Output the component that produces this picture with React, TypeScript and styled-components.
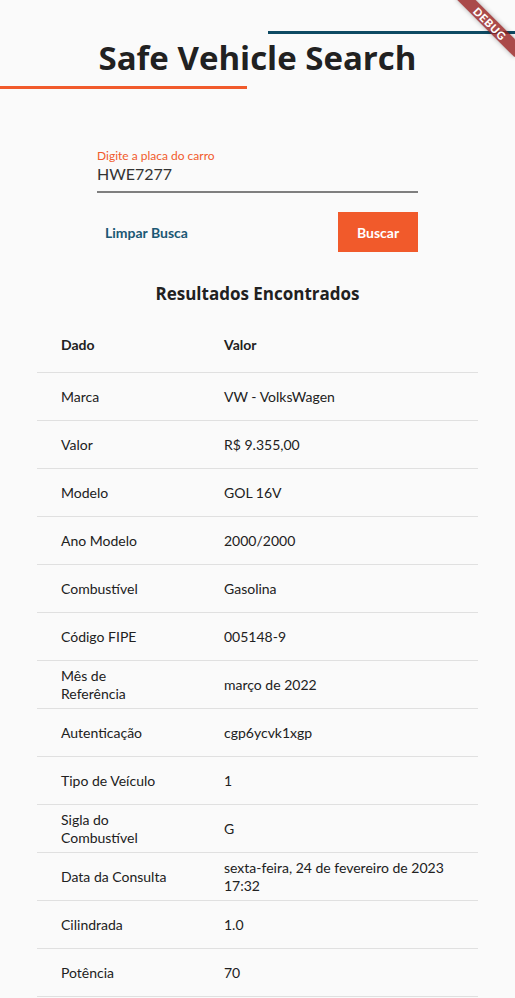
import React from "react";
import styled, { createGlobalStyle } from "styled-components";

const GlobalStyle = createGlobalStyle`
  html, body {
    margin: 0;
    padding: 0;
    background: #fafafa;
    overflow: hidden;
  }
  * { box-sizing: border-box; }
`;

const Page = styled.div`
  position: relative;
  width: 515px;
  height: 998px;
  overflow: hidden;
  background: #fafafa;
  font-family: Lato, "Open Sans", sans-serif;
  color: #212121;
  display: flex;
  flex-direction: column;
`;

const Bar = styled.div<{ $color: string; $side: "left" | "right" }>`
  width: 247px;
  height: 3px;
  background: ${(p) => p.$color};
  align-self: ${(p) => (p.$side === "left" ? "flex-start" : "flex-end")};
`;

const TopBar = styled(Bar)`
  margin-top: 31px;
`;

const BottomBar = styled(Bar)`
  margin-top: 8px;
`;

const Title = styled.h1`
  margin: 4px 0 0;
  font-family: "Open Sans", Lato, sans-serif;
  font-size: 33px;
  line-height: 40px;
  font-weight: 700;
  text-align: center;
  color: #212121;
`;

const Form = styled.div`
  width: 321px;
  margin: 59px auto 0;
  display: flex;
  flex-direction: column;
`;

const Field = styled.label`
  display: flex;
  flex-direction: column;
  padding-bottom: 7px;
  border-bottom: 2px solid #7f7f7f;
`;

const FieldLabel = styled.span`
  font-size: 12px;
  line-height: 16px;
  color: #f15a2b;
`;

const FieldValue = styled.span`
  font-size: 16px;
  line-height: 20px;
  color: #333333;
`;

const Actions = styled.div`
  margin-top: 19px;
  display: flex;
  justify-content: space-between;
  align-items: center;
`;

const TextButton = styled.button`
  border: none;
  background: transparent;
  padding: 0 8px;
  height: 40px;
  font-family: inherit;
  font-size: 14px;
  font-weight: 700;
  color: #1b5874;
  cursor: pointer;
`;

const PrimaryButton = styled.button`
  border: none;
  background: #f15a2b;
  width: 80px;
  height: 40px;
  font-family: inherit;
  font-size: 14px;
  font-weight: 700;
  color: #ffffff;
  cursor: pointer;
`;

const SectionTitle = styled.h2`
  margin: 31px 0 0;
  font-family: "Open Sans", Lato, sans-serif;
  font-size: 17px;
  line-height: 22px;
  font-weight: 700;
  text-align: center;
  color: #212121;
`;

const Table = styled.div`
  width: 441px;
  margin: 12px auto 0;
  display: flex;
  flex-direction: column;
`;

const Row = styled.div<{ $head?: boolean }>`
  display: grid;
  grid-template-columns: 107px 1fr;
  column-gap: 56px;
  align-items: center;
  padding: 0 24px;
  height: ${(p) => (p.$head ? 56 : 48)}px;
  border-bottom: 1px solid #e0e0e0;
  font-size: 14px;
  line-height: 18px;
  font-weight: ${(p) => (p.$head ? 700 : 400)};
  color: #212121;
`;

const Cell = styled.div``;

const Banner = styled.div`
  position: absolute;
  top: 17px;
  right: -16px;
  width: 82px;
  height: 13px;
  transform: rotate(45deg);
  background: rgba(150, 30, 30, 0.8);
  box-shadow: 0 0 5px rgba(0, 0, 0, 0.3);
  color: #ffffff;
  font-family: Lato, sans-serif;
  font-size: 11px;
  font-weight: 900;
  line-height: 13px;
  letter-spacing: 0.6px;
  text-align: center;
`;

const rows: [string, string][] = [
  ["Marca", "VW - VolksWagen"],
  ["Valor", "R$ 9.355,00"],
  ["Modelo", "GOL 16V"],
  ["Ano Modelo", "2000/2000"],
  ["Combustível", "Gasolina"],
  ["Código FIPE", "005148-9"],
  ["Mês de Referência", "março de 2022"],
  ["Autenticação", "cgp6ycvk1xgp"],
  ["Tipo de Veículo", "1"],
  ["Sigla do Combustível", "G"],
  ["Data da Consulta", "sexta-feira, 24 de fevereiro de 2023 17:32"],
  ["Cilindrada", "1.0"],
  ["Potência", "70"],
];

export default function App() {
  return (
    <>
      <GlobalStyle />
      <Page>
        <TopBar $color="#0e4a63" $side="right" />
        <Title>Safe Vehicle Search</Title>
        <BottomBar $color="#f15a2b" $side="left" />
        <Form>
          <Field>
            <FieldLabel>Digite a placa do carro</FieldLabel>
            <FieldValue>HWE7277</FieldValue>
          </Field>
          <Actions>
            <TextButton>Limpar Busca</TextButton>
            <PrimaryButton>Buscar</PrimaryButton>
          </Actions>
        </Form>
        <SectionTitle>Resultados Encontrados</SectionTitle>
        <Table>
          <Row $head>
            <Cell>Dado</Cell>
            <Cell>Valor</Cell>
          </Row>
          {rows.map(([k, v]) => (
            <Row key={k}>
              <Cell>{k}</Cell>
              <Cell>{v}</Cell>
            </Row>
          ))}
        </Table>
        <Banner>DEBUG</Banner>
      </Page>
    </>
  );
}
